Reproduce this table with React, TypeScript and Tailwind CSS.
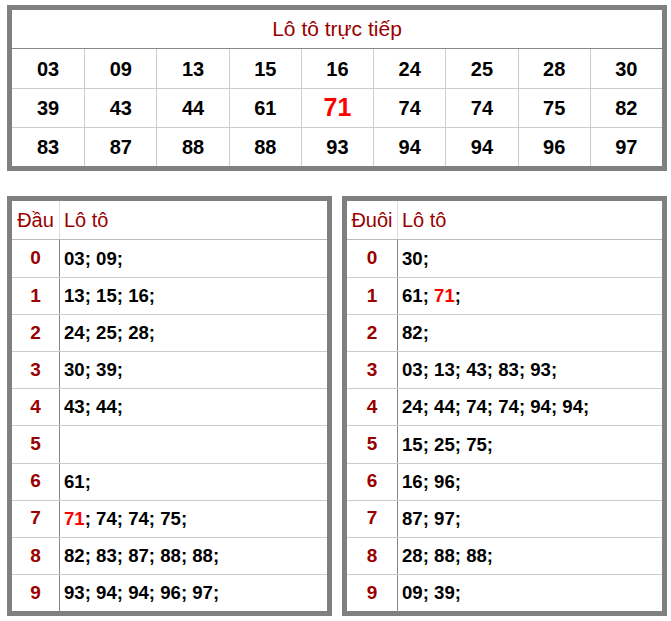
const live = [
  ["03", "09", "13", "15", "16", "24", "25", "28", "30"],
  ["39", "43", "44", "61", "71", "74", "74", "75", "82"],
  ["83", "87", "88", "88", "93", "94", "94", "96", "97"],
];

const dau = [
  ["03", "09"],
  ["13", "15", "16"],
  ["24", "25", "28"],
  ["30", "39"],
  ["43", "44"],
  [],
  ["61"],
  ["71", "74", "74", "75"],
  ["82", "83", "87", "88", "88"],
  ["93", "94", "94", "96", "97"],
];

const duoi = [
  ["30"],
  ["61", "71"],
  ["82"],
  ["03", "13", "43", "83", "93"],
  ["24", "44", "74", "74", "94", "94"],
  ["15", "25", "75"],
  ["16", "96"],
  ["87", "97"],
  ["28", "88", "88"],
  ["09", "39"],
];

const HOT = "71";

const LotoList = ({ nums }: { nums: string[] }) => (
  <>
    {nums.map((n, i) => (
      <span key={i}>
        <span className={n === HOT ? "text-[#ff0000]" : ""}>{n}</span>;{" "}
      </span>
    ))}
  </>
);

const SplitTable = ({
  label,
  colWidth,
  rows,
}: {
  label: string;
  colWidth: string;
  rows: string[][];
}) => (
  <div className="w-[325px] border-[5px] border-[#808080] bg-white">
    {/* Header */}
    <div className="flex h-[39px] border-b border-[#bbbbbb] text-[20px] text-[#990000]">
      <div className={`${colWidth} flex items-center justify-center border-r border-[#dddddd]`}>
        {label}
      </div>
      <div className="flex items-center pl-[4px]">Lô tô</div>
    </div>

    {rows.map((nums, i) => (
      <div key={i} className={`flex h-[37.1px] ${i > 0 ? "border-t border-[#cccccc]" : ""}`}>
        <div
          className={`${colWidth} flex items-center justify-center border-r border-[#888888] text-[19px] font-bold text-[#990000]`}
        >
          {i}
        </div>
        <div className="flex items-center pl-[4px] text-[18.6px] font-bold text-black">
          <span>
            <LotoList nums={nums} />
          </span>
        </div>
      </div>
    ))}
  </div>
);

export default function App() {
  return (
    <div className="min-h-[621px] w-[671px] bg-white pl-[7px] pt-[5px] font-['Liberation_Sans',Arial,sans-serif]">
      {/* Live results */}
      <div className="w-[660px] border-[5px] border-[#808080] bg-white">
        <div className="flex h-[39px] items-center justify-center border-b border-[#888888] text-[21px] text-[#990000]">
          Lô tô trực tiếp
        </div>
        <div className="grid grid-cols-9">
          {live.map((row, r) =>
            row.map((n, c) => (
              <div
                key={`${r}-${c}`}
                className={`flex h-[39px] items-center justify-center font-bold ${
                  c > 0 ? "border-l border-[#cccccc]" : ""
                } ${r > 0 ? "border-t border-[#cccccc]" : ""} ${
                  n === HOT ? "text-[25px] text-[#ff0000]" : "text-[20px] text-black"
                }`}
              >
                {n}
              </div>
            ))
          )}
        </div>
      </div>

      {/* Head / tail tables */}
      <div className="mt-[25px] flex gap-[10px]">
        <SplitTable label="Đầu" colWidth="w-[48px]" rows={dau} />
        <SplitTable label="Đuôi" colWidth="w-[51px]" rows={duoi} />
      </div>
    </div>
  );
}
